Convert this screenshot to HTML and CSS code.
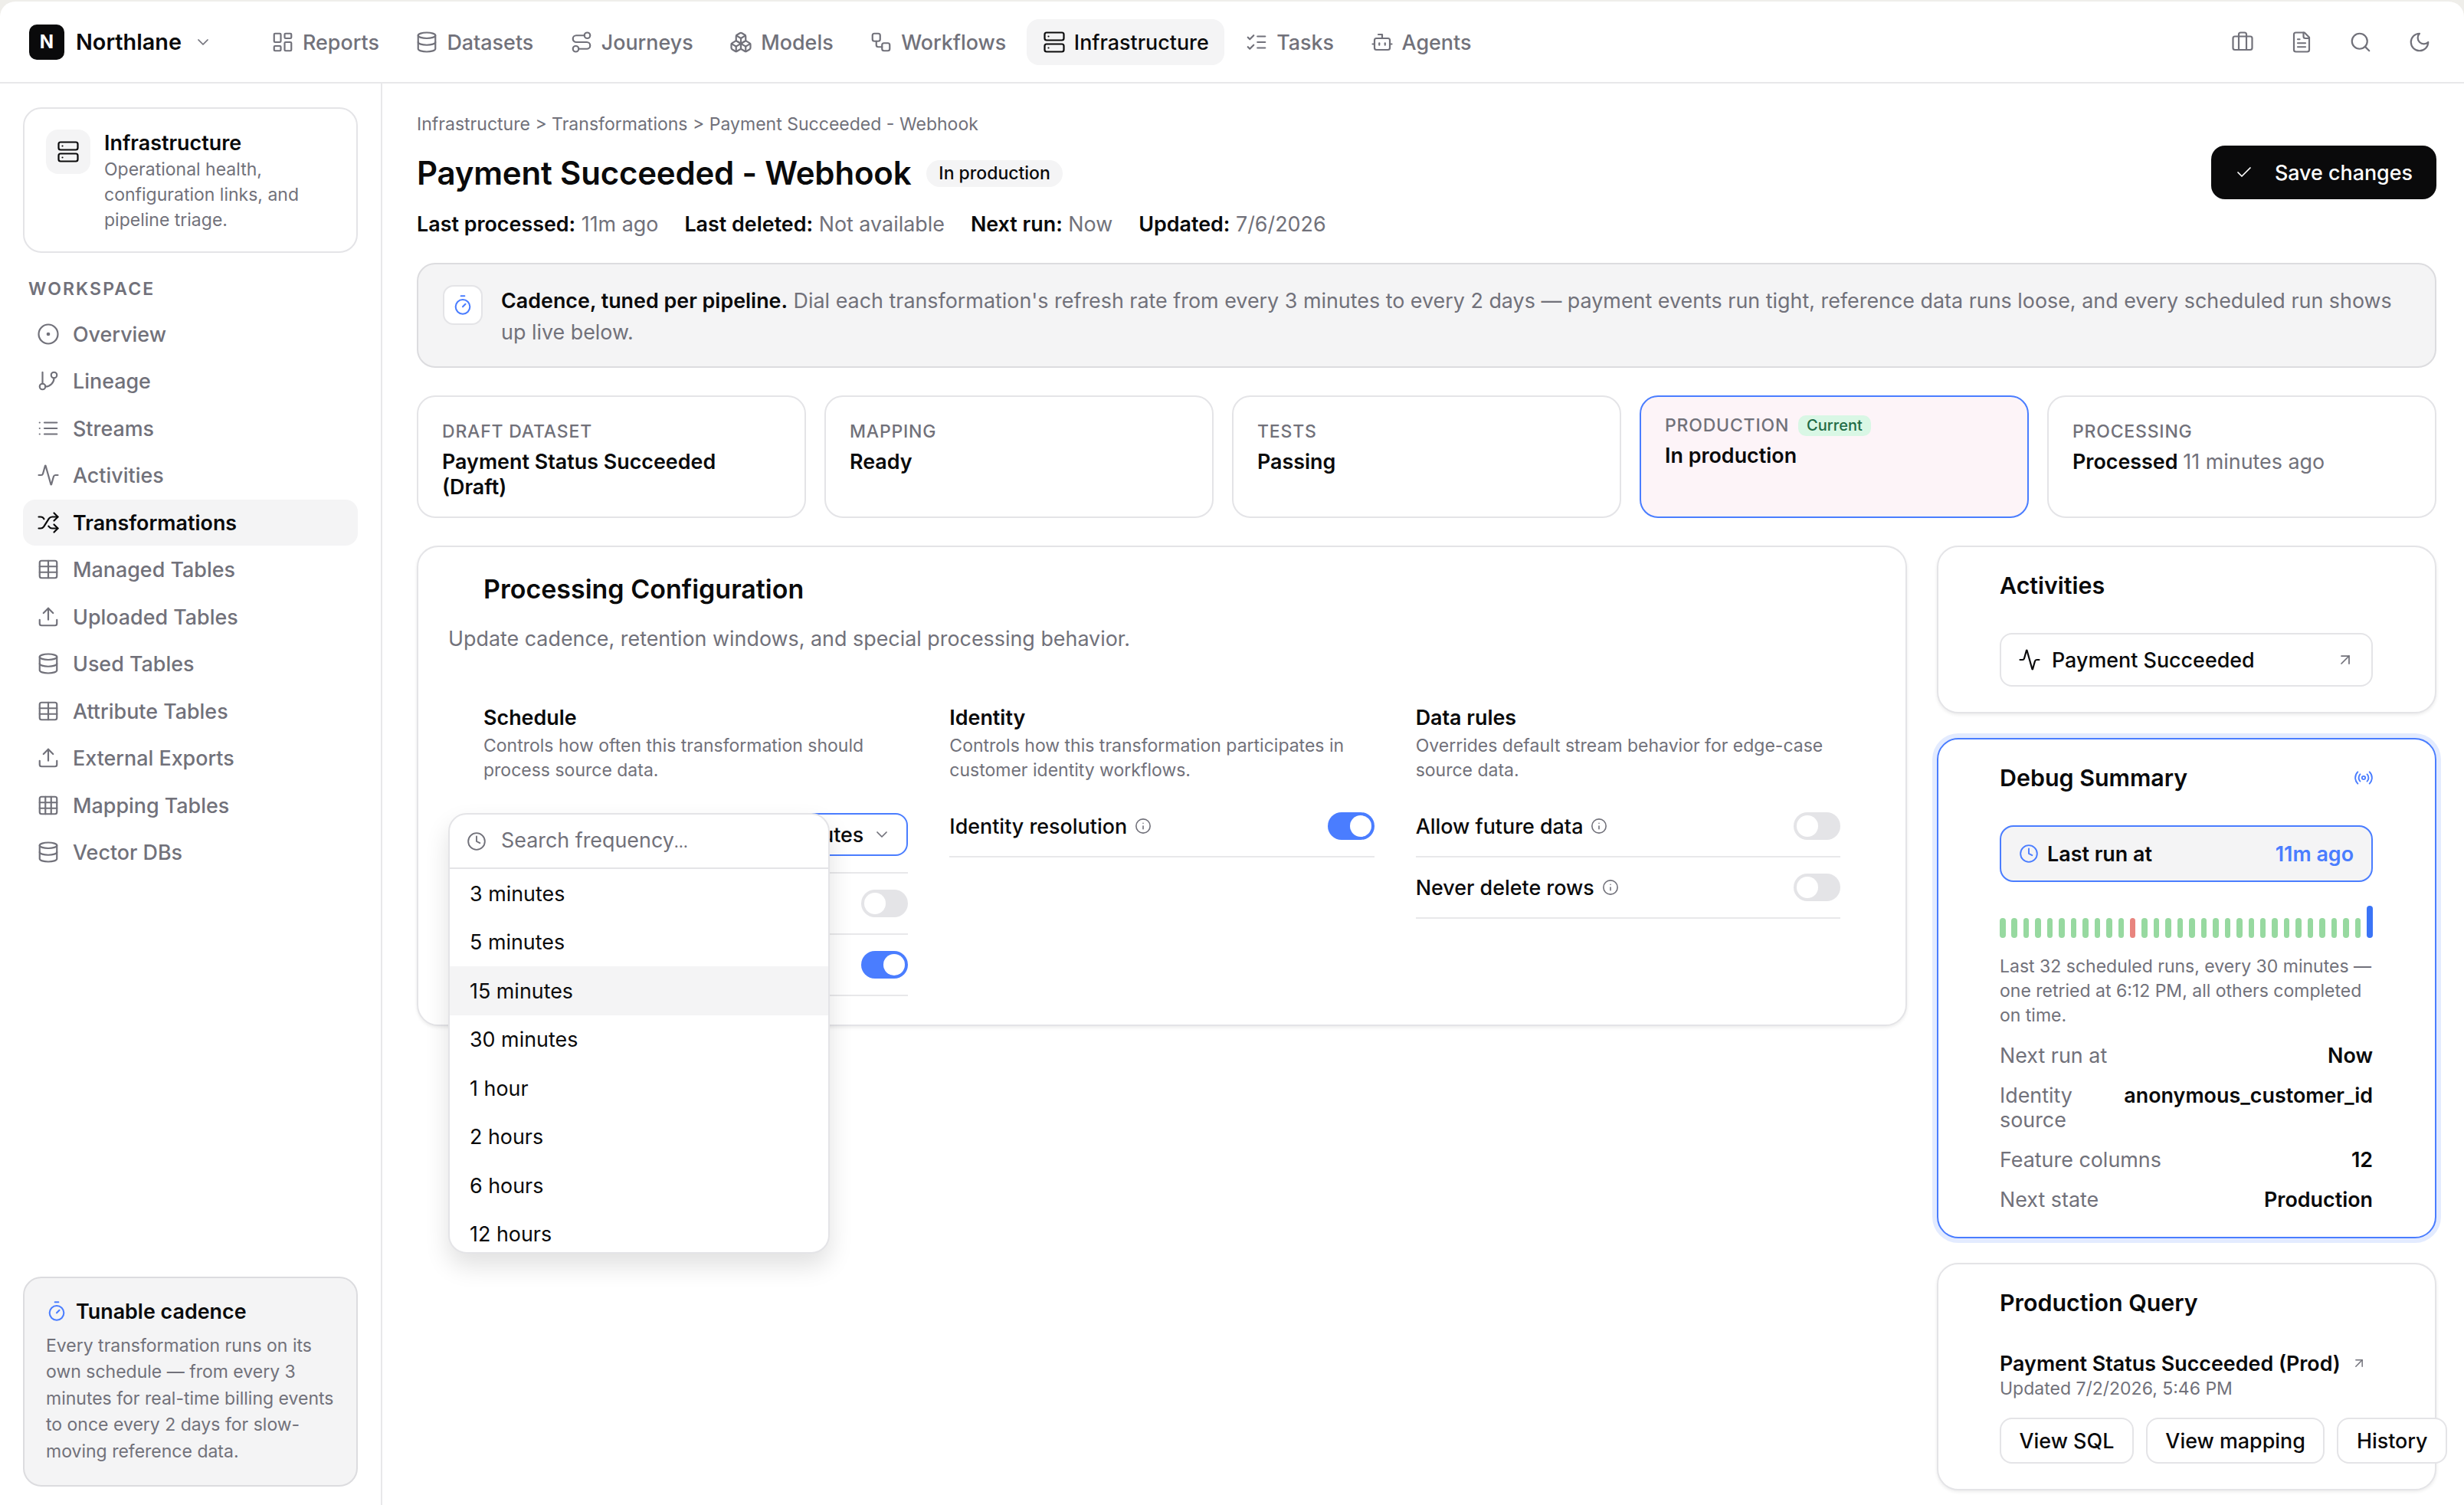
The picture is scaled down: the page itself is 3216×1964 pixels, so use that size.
FILE: index.html
```html
<!DOCTYPE html>
<html lang="en">
<head>
    <meta charset="UTF-8">
    <meta name="viewport" content="width=device-width, initial-scale=1.0">
    <title>Northlane - Payment Succeeded - Webhook</title>
    <link rel="stylesheet" href="styles.css">
</head>
<body>
    <!-- icon sprite -->
    <svg class="sprite" aria-hidden="true">
        <symbol id="i-dashboard" viewBox="0 0 24 24"><rect width="7" height="9" x="3" y="3" rx="1"/><rect width="7" height="5" x="14" y="3" rx="1"/><rect width="7" height="9" x="14" y="12" rx="1"/><rect width="7" height="5" x="3" y="16" rx="1"/></symbol>
        <symbol id="i-database" viewBox="0 0 24 24"><ellipse cx="12" cy="5" rx="9" ry="3"/><path d="M3 5V19A9 3 0 0 0 21 19V5"/><path d="M3 12A9 3 0 0 0 21 12"/></symbol>
        <symbol id="i-route" viewBox="0 0 24 24"><circle cx="6" cy="19" r="3"/><path d="M9 19h8.5a3.5 3.5 0 0 0 0-7h-11a3.5 3.5 0 0 1 0-7H15"/><circle cx="18" cy="5" r="3"/></symbol>
        <symbol id="i-boxes" viewBox="0 0 24 24"><path d="M2.97 12.92A2 2 0 0 0 2 14.63v3.24a2 2 0 0 0 .97 1.71l3 1.8a2 2 0 0 0 2.06 0L12 19v-5.5l-5-3-4.03 2.42Z"/><path d="m7 16.5-4.74-2.85"/><path d="m7 16.5 5-3"/><path d="M7 16.5v5.17"/><path d="M12 13.5V19l3.97 2.38a2 2 0 0 0 2.06 0l3-1.8a2 2 0 0 0 .97-1.71v-3.24a2 2 0 0 0-.97-1.71L17 10.5l-5 3Z"/><path d="m17 16.5-5-3"/><path d="m17 16.5 4.74-2.85"/><path d="M17 16.5v5.17"/><path d="M7.97 4.42A2 2 0 0 0 7 6.13v4.37l5 3 5-3V6.13a2 2 0 0 0-.97-1.71l-3-1.8a2 2 0 0 0-2.06 0l-3 1.8Z"/><path d="M12 8 7.26 5.15"/><path d="m12 8 4.74-2.85"/><path d="M12 13.5V8"/></symbol>
        <symbol id="i-workflow" viewBox="0 0 24 24"><rect width="8" height="8" x="3" y="3" rx="2"/><path d="M7 11v4a2 2 0 0 0 2 2h4"/><rect width="8" height="8" x="13" y="13" rx="2"/></symbol>
        <symbol id="i-server" viewBox="0 0 24 24"><rect width="20" height="8" x="2" y="2" rx="2"/><rect width="20" height="8" x="2" y="14" rx="2"/><path d="M6 6h.01"/><path d="M6 18h.01"/></symbol>
        <symbol id="i-checks" viewBox="0 0 24 24"><path d="m3 17 2 2 4-4"/><path d="m3 7 2 2 4-4"/><path d="M13 6h8"/><path d="M13 12h8"/><path d="M13 18h8"/></symbol>
        <symbol id="i-bot" viewBox="0 0 24 24"><path d="M12 8V4H8"/><rect width="16" height="12" x="4" y="8" rx="2"/><path d="M2 14h2"/><path d="M20 14h2"/><path d="M15 13v2"/><path d="M9 13v2"/></symbol>
        <symbol id="i-briefcase" viewBox="0 0 24 24"><path d="M16 20V4a2 2 0 0 0-2-2h-4a2 2 0 0 0-2 2v16"/><rect width="20" height="14" x="2" y="6" rx="2"/></symbol>
        <symbol id="i-file" viewBox="0 0 24 24"><path d="M15 2H6a2 2 0 0 0-2 2v16a2 2 0 0 0 2 2h12a2 2 0 0 0 2-2V7Z"/><path d="M14 2v4a2 2 0 0 0 2 2h4"/><path d="M10 9H8"/><path d="M16 13H8"/><path d="M16 17H8"/></symbol>
        <symbol id="i-search" viewBox="0 0 24 24"><circle cx="11" cy="11" r="8"/><path d="m21 21-4.3-4.3"/></symbol>
        <symbol id="i-moon" viewBox="0 0 24 24"><path d="M12 3a6 6 0 0 0 9 9 9 9 0 1 1-9-9Z"/></symbol>
        <symbol id="i-chevron" viewBox="0 0 24 24"><path d="m6 9 6 6 6-6"/></symbol>
        <symbol id="i-dot" viewBox="0 0 24 24"><circle cx="12" cy="12" r="10"/><circle cx="12" cy="12" r="1"/></symbol>
        <symbol id="i-branch" viewBox="0 0 24 24"><path d="M6 3v12"/><circle cx="18" cy="6" r="3"/><circle cx="6" cy="18" r="3"/><path d="M18 9a9 9 0 0 1-9 9"/></symbol>
        <symbol id="i-list" viewBox="0 0 24 24"><path d="M3 12h.01"/><path d="M3 18h.01"/><path d="M3 6h.01"/><path d="M8 12h13"/><path d="M8 18h13"/><path d="M8 6h13"/></symbol>
        <symbol id="i-activity" viewBox="0 0 24 24"><path d="M22 12h-2.48a2 2 0 0 0-1.93 1.46l-2.35 8.36a.25.25 0 0 1-.48 0L9.24 2.18a.25.25 0 0 0-.48 0l-2.35 8.36A2 2 0 0 1 4.49 12H2"/></symbol>
        <symbol id="i-shuffle" viewBox="0 0 24 24"><path d="m18 14 4 4-4 4"/><path d="m18 2 4 4-4 4"/><path d="M2 18h1.973a4 4 0 0 0 3.3-1.7l5.454-8.6a4 4 0 0 1 3.3-1.7H22"/><path d="M2 6h1.972a4 4 0 0 1 3.6 2.2"/><path d="M22 18h-6.041a4 4 0 0 1-3.3-1.8l-.359-.45"/></symbol>
        <symbol id="i-table" viewBox="0 0 24 24"><path d="M12 3v18"/><rect width="18" height="18" x="3" y="3" rx="2"/><path d="M3 9h18"/><path d="M3 15h18"/></symbol>
        <symbol id="i-grid" viewBox="0 0 24 24"><rect width="18" height="18" x="3" y="3" rx="2"/><path d="M3 9h18"/><path d="M3 15h18"/><path d="M9 3v18"/><path d="M15 3v18"/></symbol>
        <symbol id="i-upload" viewBox="0 0 24 24"><path d="M12 3v12"/><path d="m17 8-5-5-5 5"/><path d="M21 15v4a2 2 0 0 1-2 2H5a2 2 0 0 1-2-2v-4"/></symbol>
        <symbol id="i-timer" viewBox="0 0 24 24"><path d="M10 2h4"/><path d="m12 14 3-3"/><circle cx="12" cy="14" r="8"/></symbol>
        <symbol id="i-clock" viewBox="0 0 24 24"><circle cx="12" cy="12" r="10"/><path d="M12 6v6l4 2"/></symbol>
        <symbol id="i-radio" viewBox="0 0 24 24"><path d="M4.9 19.1C1 15.2 1 8.8 4.9 4.9"/><path d="M7.8 16.2c-2.3-2.3-2.3-6.1 0-8.5"/><circle cx="12" cy="12" r="2"/><path d="M16.2 7.8c2.3 2.3 2.3 6.1 0 8.5"/><path d="M19.1 4.9C23 8.8 23 15.1 19.1 19"/></symbol>
        <symbol id="i-info" viewBox="0 0 24 24"><circle cx="12" cy="12" r="10"/><path d="M12 16v-4"/><path d="M12 8h.01"/></symbol>
        <symbol id="i-arrow" viewBox="0 0 24 24"><path d="M7 7h10v10"/><path d="M7 17 17 7"/></symbol>
        <symbol id="i-check" viewBox="0 0 24 24"><path d="M20 6 9 17l-5-5"/></symbol>
    </svg>

    <div class="app">
        <header class="topbar">
            <div class="brand">
                <span class="brand-mark">N</span>
                <span class="brand-name">Northlane</span>
                <svg class="icon icon-chevron"><use href="#i-chevron"/></svg>
            </div>
            <nav class="topnav">
                <a class="topnav-item"><svg class="icon"><use href="#i-dashboard"/></svg>Reports</a>
                <a class="topnav-item"><svg class="icon"><use href="#i-database"/></svg>Datasets</a>
                <a class="topnav-item"><svg class="icon"><use href="#i-route"/></svg>Journeys</a>
                <a class="topnav-item"><svg class="icon"><use href="#i-boxes"/></svg>Models</a>
                <a class="topnav-item"><svg class="icon"><use href="#i-workflow"/></svg>Workflows</a>
                <a class="topnav-item active"><svg class="icon"><use href="#i-server"/></svg>Infrastructure</a>
                <a class="topnav-item"><svg class="icon"><use href="#i-checks"/></svg>Tasks</a>
                <a class="topnav-item"><svg class="icon"><use href="#i-bot"/></svg>Agents</a>
            </nav>
            <div class="top-actions">
                <svg class="icon"><use href="#i-briefcase"/></svg>
                <svg class="icon"><use href="#i-file"/></svg>
                <svg class="icon"><use href="#i-search"/></svg>
                <svg class="icon"><use href="#i-moon"/></svg>
            </div>
        </header>

        <div class="layout">
            <aside class="sidebar">
                <div class="side-card">
                    <span class="side-card-icon"><svg class="icon"><use href="#i-server"/></svg></span>
                    <div>
                        <div class="side-card-title">Infrastructure</div>
                        <p class="side-card-text">Operational health, configuration links, and pipeline triage.</p>
                    </div>
                </div>
                <div class="side-label">WORKSPACE</div>
                <nav class="sidenav">
                    <a class="sidenav-item"><svg class="icon"><use href="#i-dot"/></svg>Overview</a>
                    <a class="sidenav-item"><svg class="icon"><use href="#i-branch"/></svg>Lineage</a>
                    <a class="sidenav-item"><svg class="icon"><use href="#i-list"/></svg>Streams</a>
                    <a class="sidenav-item"><svg class="icon"><use href="#i-activity"/></svg>Activities</a>
                    <a class="sidenav-item active"><svg class="icon"><use href="#i-shuffle"/></svg>Transformations</a>
                    <a class="sidenav-item"><svg class="icon"><use href="#i-table"/></svg>Managed Tables</a>
                    <a class="sidenav-item"><svg class="icon"><use href="#i-upload"/></svg>Uploaded Tables</a>
                    <a class="sidenav-item"><svg class="icon"><use href="#i-database"/></svg>Used Tables</a>
                    <a class="sidenav-item"><svg class="icon"><use href="#i-table"/></svg>Attribute Tables</a>
                    <a class="sidenav-item"><svg class="icon"><use href="#i-upload"/></svg>External Exports</a>
                    <a class="sidenav-item"><svg class="icon"><use href="#i-grid"/></svg>Mapping Tables</a>
                    <a class="sidenav-item"><svg class="icon"><use href="#i-database"/></svg>Vector DBs</a>
                </nav>
                <div class="tip">
                    <div class="tip-title"><svg class="icon icon-blue"><use href="#i-timer"/></svg>Tunable cadence</div>
                    <p class="tip-text">Every transformation runs on its own schedule — from every 3 minutes for real-time billing events to once every 2 days for slow-moving reference data.</p>
                </div>
            </aside>

            <main class="main">
                <div class="crumbs">Infrastructure &gt; Transformations &gt; Payment Succeeded - Webhook</div>
                <div class="page-head">
                    <div class="page-title">
                        <h1>Payment Succeeded - Webhook</h1>
                        <span class="badge">In production</span>
                    </div>
                    <button class="btn-save"><svg class="icon"><use href="#i-check"/></svg>Save changes</button>
                </div>
                <div class="meta">
                    <span><b>Last processed:</b> 11m ago</span>
                    <span><b>Last deleted:</b> Not available</span>
                    <span><b>Next run:</b> Now</span>
                    <span><b>Updated:</b> 7/6/2026</span>
                </div>

                <div class="banner">
                    <span class="banner-icon"><svg class="icon icon-blue"><use href="#i-timer"/></svg></span>
                    <p><b>Cadence, tuned per pipeline.</b> Dial each transformation's refresh rate from every 3 minutes to every 2 days — payment events run tight, reference data runs loose, and every scheduled run shows up live below.</p>
                </div>

                <div class="stages">
                    <div class="stage">
                        <div class="stage-label">DRAFT DATASET</div>
                        <div class="stage-value">Payment Status Succeeded (Draft)</div>
                    </div>
                    <div class="stage">
                        <div class="stage-label">MAPPING</div>
                        <div class="stage-value">Ready</div>
                    </div>
                    <div class="stage">
                        <div class="stage-label">TESTS</div>
                        <div class="stage-value">Passing</div>
                    </div>
                    <div class="stage current">
                        <div class="stage-label">PRODUCTION <span class="stage-badge">Current</span></div>
                        <div class="stage-value">In production</div>
                    </div>
                    <div class="stage">
                        <div class="stage-label">PROCESSING</div>
                        <div class="stage-value">Processed <span class="muted">11 minutes ago</span></div>
                    </div>
                </div>

                <div class="columns">
                    <section class="card config">
                        <h2>Processing Configuration</h2>
                        <p class="config-sub">Update cadence, retention windows, and special processing behavior.</p>
                        <div class="config-grid">
                            <div>
                                <h3>Schedule</h3>
                                <p class="group-text">Controls how often this transformation should process source data.</p>
                                <div class="row row-select">
                                    <div class="select">15 minutes<svg class="icon"><use href="#i-chevron"/></svg></div>
                                </div>
                                <div class="row"><span class="toggle"></span></div>
                                <div class="row"><span class="toggle on"></span></div>
                            </div>
                            <div>
                                <h3>Identity</h3>
                                <p class="group-text">Controls how this transformation participates in customer identity workflows.</p>
                                <div class="row">
                                    <span class="row-label">Identity resolution<svg class="icon"><use href="#i-info"/></svg></span>
                                    <span class="toggle on"></span>
                                </div>
                            </div>
                            <div>
                                <h3>Data rules</h3>
                                <p class="group-text">Overrides default stream behavior for edge-case source data.</p>
                                <div class="row">
                                    <span class="row-label">Allow future data<svg class="icon"><use href="#i-info"/></svg></span>
                                    <span class="toggle"></span>
                                </div>
                                <div class="row">
                                    <span class="row-label">Never delete rows<svg class="icon"><use href="#i-info"/></svg></span>
                                    <span class="toggle"></span>
                                </div>
                            </div>
                        </div>

                        <!-- open frequency menu -->
                        <div class="menu">
                            <div class="menu-search"><svg class="icon"><use href="#i-clock"/></svg><span>Search frequency<span class="ellipsis">…</span></span></div>
                            <div class="menu-list">
                                <div class="menu-item">3 minutes</div>
                                <div class="menu-item">5 minutes</div>
                                <div class="menu-item hover">15 minutes</div>
                                <div class="menu-item">30 minutes</div>
                                <div class="menu-item">1 hour</div>
                                <div class="menu-item">2 hours</div>
                                <div class="menu-item">6 hours</div>
                                <div class="menu-item">12 hours</div>
                            </div>
                        </div>
                    </section>

                    <div class="rail">
                        <section class="card rail-card">
                            <h2>Activities</h2>
                            <a class="link-box">
                                <svg class="icon"><use href="#i-activity"/></svg>
                                <span>Payment Succeeded</span>
                                <svg class="icon icon-arrow"><use href="#i-arrow"/></svg>
                            </a>
                        </section>

                        <section class="card rail-card debug">
                            <div class="debug-head">
                                <h2>Debug Summary</h2>
                                <svg class="icon icon-blue"><use href="#i-radio"/></svg>
                            </div>
                            <div class="last-run">
                                <svg class="icon icon-blue"><use href="#i-clock"/></svg>
                                <span>Last run at</span>
                                <b>11m ago</b>
                            </div>
                            <div class="bars">
                                <i></i><i></i><i></i><i></i><i></i><i></i><i></i><i></i><i></i><i></i><i></i>
                                <i class="retry"></i>
                                <i></i><i></i><i></i><i></i><i></i><i></i><i></i><i></i><i></i><i></i><i></i><i></i><i></i><i></i><i></i><i></i><i></i><i></i><i></i>
                                <i class="now"></i>
                            </div>
                            <p class="bars-text">Last 32 scheduled runs, every 30 minutes — one retried at 6:12 PM, all others completed on time.</p>
                            <dl class="facts">
                                <div><dt>Next run at</dt><dd>Now</dd></div>
                                <div><dt>Identity source</dt><dd>anonymous_customer_id</dd></div>
                                <div><dt>Feature columns</dt><dd>12</dd></div>
                                <div><dt>Next state</dt><dd>Production</dd></div>
                            </dl>
                        </section>

                        <section class="card rail-card query">
                            <h2>Production Query</h2>
                            <div class="query-name">Payment Status Succeeded (Prod)<svg class="icon icon-arrow"><use href="#i-arrow"/></svg></div>
                            <div class="query-date">Updated 7/2/2026, 5:46 PM</div>
                            <div class="query-actions">
                                <button class="btn">View SQL</button>
                                <button class="btn">View mapping</button>
                                <button class="btn">History</button>
                            </div>
                        </section>
                    </div>
                </div>
            </main>
        </div>
    </div>
</body>
</html>
```

FILE: styles.css
```css
:root {
    --text: #0a0a0b;
    --muted: #71717a;
    --line: #e4e4e7;
    --soft: #f4f4f5;
    --blue: #4a7dff;
}

* {
    box-sizing: border-box;
}

html, body {
    margin: 0;
    height: 100%;
    overflow: hidden;
}

body {
    padding-top: 2px;
    background-color: #efeeea;
    color: var(--text);
    font-family: "Inter", "Liberation Sans", sans-serif;
    font-size: 26.88px;
    line-height: 40px;
}

h1, h2, h3, p, dl, dd {
    margin: 0;
}

b {
    font-weight: 600;
}

.sprite {
    display: none;
}

.icon {
    width: 30px;
    height: 30px;
    flex: none;
    fill: none;
    stroke: currentColor;
    stroke-width: 1.75;
    stroke-linecap: round;
    stroke-linejoin: round;
}

.icon-blue {
    color: var(--blue);
}

.muted {
    color: var(--muted);
    font-weight: 400;
}

.app {
    display: flex;
    flex-direction: column;
    height: 1962px;
    background-color: #fff;
    border-radius: 20px 20px 0 0;
}

/* Top bar */
.topbar {
    display: flex;
    align-items: center;
    height: 107px;
    padding: 0 43px 0 38px;
    border-bottom: 2px solid #e8e8ea;
    flex: none;
}

.brand {
    display: flex;
    align-items: center;
    width: 295.5px;
}

.brand-mark {
    display: flex;
    align-items: center;
    justify-content: center;
    width: 46px;
    height: 46px;
    border-radius: 10px;
    background-color: var(--text);
    color: #fff;
    font-size: 24px;
    font-weight: 700;
}

.brand-name {
    margin-left: 15px;
    font-size: 28.8px;
    font-weight: 600;
}

.icon-chevron {
    width: 24px;
    height: 24px;
    margin-left: 16px;
    color: var(--muted);
}

.topnav {
    display: flex;
    align-items: center;
    gap: 6.5px;
}

.topnav-item {
    display: flex;
    align-items: center;
    gap: 11px;
    height: 60px;
    padding: 0 20.5px;
    border-radius: 16px;
    color: var(--muted);
    font-weight: 500;
}

.topnav-item.active {
    background-color: var(--soft);
    color: var(--text);
}

.top-actions {
    display: flex;
    gap: 47px;
    margin-left: auto;
    color: var(--muted);
}

/* Sidebar */
.layout {
    display: flex;
    flex: 1;
    min-height: 0;
}

.sidebar {
    display: flex;
    flex-direction: column;
    width: 499px;
    padding: 31px 30px 24px;
    border-right: 2px solid #e8e8ea;
    flex: none;
}

.side-card {
    display: flex;
    gap: 18px;
    height: 190px;
    padding: 26px 28px;
    border: 2px solid var(--line);
    border-radius: 24px;
}

.side-card-icon {
    display: flex;
    align-items: center;
    justify-content: center;
    width: 58px;
    height: 58px;
    margin-top: 1px;
    border-radius: 16px;
    background-color: var(--soft);
    flex: none;
}

.side-card-title {
    font-weight: 600;
    line-height: 36px;
}

.side-card-text {
    margin-top: 1px;
    color: var(--muted);
    font-size: 23px;
    line-height: 33px;
}

.side-label {
    margin: 32px 0 0 7px;
    color: var(--muted);
    font-size: 23px;
    font-weight: 600;
    letter-spacing: 2.1px;
    line-height: 30px;
}

.sidenav {
    display: flex;
    flex-direction: column;
    gap: 2px;
    margin-top: 14px;
}

.sidenav-item {
    display: flex;
    align-items: center;
    gap: 17px;
    height: 59.5px;
    padding: 0 18px;
    border-radius: 16px;
    color: var(--muted);
    font-weight: 500;
}

.sidenav-item.active {
    background-color: var(--soft);
    color: var(--text);
    font-weight: 600;
}

.tip {
    margin-top: auto;
    padding: 23px 28px 27px;
    border: 2px solid #dcdcdf;
    border-radius: 24px;
    background-color: var(--soft);
}

.tip-title {
    display: flex;
    align-items: center;
    gap: 11px;
    font-weight: 600;
}

.tip-title .icon {
    width: 28px;
    height: 28px;
}

.tip-text {
    margin-top: 8px;
    color: var(--muted);
    font-size: 23px;
    line-height: 34.5px;
}

/* Main */
.main {
    flex: 1;
    min-width: 0;
    padding: 37px 36px 0 45px;
}

.crumbs {
    color: var(--muted);
    font-size: 23.04px;
    line-height: 32px;
}

.page-head {
    display: flex;
    align-items: center;
    justify-content: space-between;
    height: 70px;
    margin-top: 12px;
}

.page-title {
    display: flex;
    align-items: center;
    gap: 20px;
}

h1 {
    padding-top: 2px;
    font-size: 42px;
    font-weight: 600;
    line-height: 56px;
    letter-spacing: -0.2px;
}

.badge {
    margin-top: 2px;
    padding: 0 16px;
    border-radius: 18px;
    background-color: var(--soft);
    font-size: 23px;
    font-weight: 500;
    line-height: 35px;
}

.btn-save {
    display: flex;
    align-items: center;
    gap: 28px;
    height: 70px;
    padding: 0 31px;
    border: none;
    border-radius: 18px;
    background-color: var(--text);
    color: #fff;
    font: 500 26.88px "Inter", sans-serif;
}

.btn-save .icon {
    width: 24px;
    height: 24px;
}

.meta {
    display: flex;
    gap: 34px;
    margin-top: 12px;
    color: var(--muted);
}

.meta b {
    color: var(--text);
}

.banner {
    display: flex;
    gap: 24px;
    margin-top: 31px;
    padding: 27px 32px 25px;
    border: 2px solid #dcdcdf;
    border-radius: 24px;
    background-color: var(--soft);
    color: var(--muted);
    line-height: 40.5px;
}

.banner b {
    color: var(--text);
}

.banner-icon {
    display: flex;
    align-items: center;
    justify-content: center;
    width: 52px;
    height: 52px;
    border: 2px solid var(--line);
    border-radius: 14px;
    background-color: #fff;
    flex: none;
}

.banner-icon .icon {
    width: 28px;
    height: 28px;
}

.stages {
    display: grid;
    grid-template-columns: repeat(5, 1fr);
    gap: 24px;
    margin-top: 36px;
}

.stage {
    height: 160px;
    padding: 30px 31px 0;
    border: 2px solid var(--line);
    border-radius: 24px;
}

.stage-label {
    display: flex;
    align-items: center;
    gap: 12px;
    color: var(--muted);
    font-size: 23px;
    font-weight: 500;
    letter-spacing: 0.8px;
    line-height: 30px;
}

.stage-value {
    margin-top: 8px;
    font-weight: 600;
    line-height: 33px;
}

.stage.current {
    padding-top: 22px;
    border-color: var(--blue);
    background-color: #fdf4f8;
}

.stage-badge {
    padding: 0 11px;
    border-radius: 10px;
    background-color: #d9f7e5;
    color: #1f6b45;
    font-size: 20px;
    letter-spacing: 0;
    line-height: 27px;
}

/* Cards */
.columns {
    display: flex;
    align-items: flex-start;
    gap: 39px;
    margin-top: 36px;
}

.card {
    position: relative;
    border: 2px solid var(--line);
    border-radius: 28px;
    background-color: #fff;
    box-shadow: 0 2px 4px rgba(0, 0, 0, 0.08);
}

.config {
    flex: 1;
    height: 627px;
    padding: 33px 39px 0;
}

.config h2 {
    margin-left: 46px;
    font-size: 34px;
    font-weight: 600;
    line-height: 44px;
}

.config-sub {
    margin-top: 22px;
    color: var(--muted);
}

.config-grid {
    display: grid;
    grid-template-columns: repeat(3, 1fr);
    gap: 54px;
    margin-top: 65px;
    padding: 0 46px;
}

h3 {
    font-size: 26.88px;
    font-weight: 600;
    line-height: 36px;
}

.group-text {
    margin: 3px 0 18px;
    color: var(--muted);
    font-size: 23px;
    line-height: 32px;
}

.row {
    display: flex;
    align-items: center;
    justify-content: flex-end;
    padding: 21px 0;
    border-bottom: 2px solid #e8e8ea;
}

.row-select {
    padding-top: 22px;
}

.row-label {
    display: flex;
    align-items: center;
    gap: 10px;
    margin-right: auto;
    font-weight: 500;
    line-height: 36px;
}

.row-label .icon {
    width: 22px;
    height: 22px;
    color: var(--muted);
}

.toggle {
    position: relative;
    width: 61px;
    height: 36px;
    border-radius: 18px;
    background-color: var(--line);
}

.toggle::after {
    content: "";
    position: absolute;
    top: 4px;
    left: 4px;
    width: 28px;
    height: 28px;
    border-radius: 50%;
    background-color: #fff;
}

.toggle.on {
    background-color: var(--blue);
}

.toggle.on::after {
    left: 29px;
}

.select {
    display: flex;
    align-items: center;
    justify-content: flex-end;
    gap: 12px;
    width: 215px;
    height: 56px;
    padding: 0 20px;
    border: 2px solid var(--blue);
    border-radius: 16px;
    font-weight: 500;
    white-space: nowrap;
}

.select .icon {
    width: 24px;
    height: 24px;
    color: var(--muted);
}

.menu {
    position: absolute;
    top: 347px;
    left: 39px;
    width: 498px;
    height: 575px;
    overflow: hidden;
    border: 2px solid var(--line);
    border-radius: 24px;
    background-color: #fff;
    box-shadow: 0 16px 32px rgba(0, 0, 0, 0.12);
}

.menu-search {
    display: flex;
    align-items: center;
    gap: 19px;
    height: 71px;
    padding: 0 22px;
    border-bottom: 2px solid var(--line);
    color: var(--muted);
}

.menu-search .icon {
    width: 26px;
    height: 26px;
}

.ellipsis {
    font-size: 21px;
}

.menu-item {
    display: flex;
    align-items: center;
    height: 63.5px;
    padding: 0 26px;
}

.menu-item.hover {
    background-color: var(--soft);
}

/* Right rail */
.rail {
    display: flex;
    flex-direction: column;
    gap: 32px;
    width: 652px;
    flex: none;
}

.rail-card {
    padding: 28px 81px 0 80px;
}

.rail-card h2 {
    font-size: 30.4px;
    font-weight: 600;
    line-height: 44px;
}

.link-box {
    display: flex;
    align-items: center;
    gap: 14px;
    height: 70px;
    margin-top: 40px;
    padding: 0 22px;
    border: 2px solid var(--line);
    border-radius: 16px;
    font-weight: 500;
}

.rail-card:first-child {
    height: 219px;
}

.icon-arrow {
    width: 24px;
    height: 24px;
    margin-left: auto;
    color: var(--muted);
}

.debug {
    height: 653px;
    border-color: var(--blue);
    box-shadow: 0 0 0 6px #e3ebff;
}

.debug-head {
    display: flex;
    align-items: center;
    justify-content: space-between;
}

.debug-head .icon {
    width: 26px;
    height: 26px;
    margin-right: -1px;
}

.last-run {
    display: flex;
    align-items: center;
    gap: 11px;
    height: 74px;
    margin-top: 40px;
    padding: 0 23px;
    border: 2px solid var(--blue);
    border-radius: 18px;
    background-color: var(--soft);
    font-weight: 600;
}

.last-run .icon {
    width: 26px;
    height: 26px;
}

.last-run b {
    margin-left: auto;
    color: var(--blue);
}

.bars {
    display: flex;
    align-items: flex-end;
    justify-content: space-between;
    height: 42px;
    margin-top: 31px;
}

.bars i {
    width: 7.5px;
    height: 26px;
    border-radius: 4px;
    background-color: #97d9a0;
}

.bars .retry {
    background-color: #e8847e;
}

.bars .now {
    height: 42px;
    background-color: #3b74f6;
}

.bars-text {
    margin-top: 21px;
    color: var(--muted);
    font-size: 23px;
    line-height: 32px;
}

.facts {
    display: flex;
    flex-direction: column;
    gap: 20px;
    margin-top: 20px;
    line-height: 32px;
}

.facts div {
    display: flex;
    justify-content: space-between;
    gap: 40px;
}

.facts dt {
    color: var(--muted);
}

.facts dd {
    font-weight: 600;
    text-align: right;
}

.query {
    height: 297px;
}

.query-name {
    display: flex;
    align-items: center;
    gap: 14px;
    margin-top: 41px;
    font-weight: 600;
    line-height: 32px;
    white-space: nowrap;
}

.query-name .icon-arrow {
    width: 20px;
    height: 20px;
    margin-left: 0;
}

.query-date {
    margin-top: 1px;
    color: var(--muted);
    font-size: 23px;
    line-height: 32px;
}

.query-actions {
    display: flex;
    gap: 16px;
    margin-top: 22px;
    white-space: nowrap;
}

.btn {
    height: 60px;
    padding: 0 23.5px;
    border: 2px solid var(--line);
    border-radius: 16px;
    background-color: #fff;
    color: var(--text);
    font: 500 26.88px "Inter", sans-serif;
}
```
